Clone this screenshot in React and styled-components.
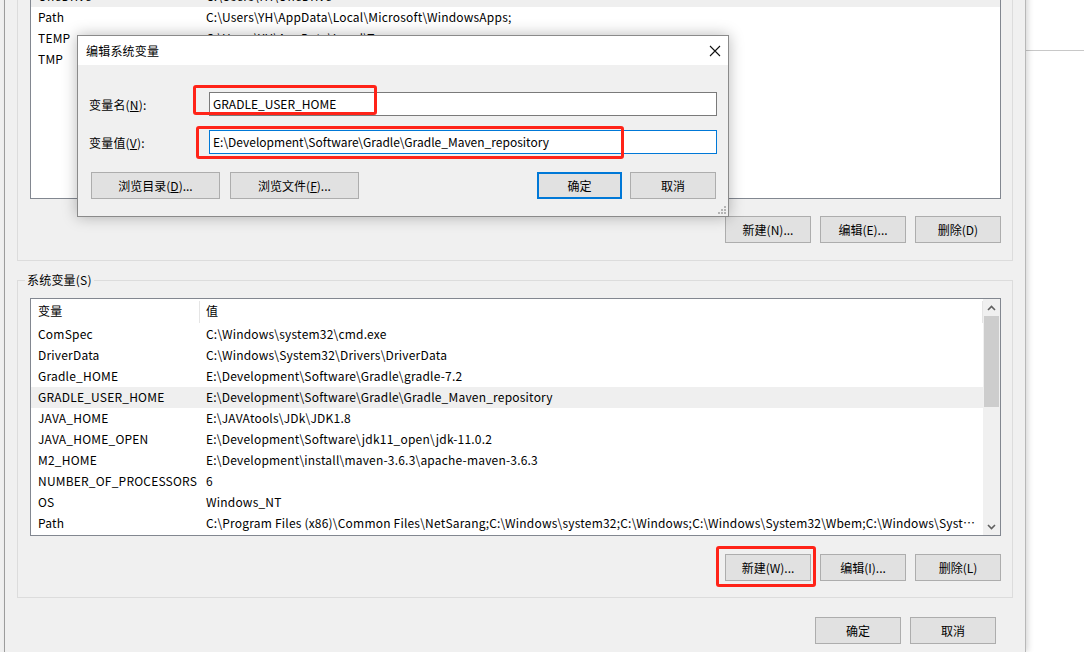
import styled, { createGlobalStyle, css } from "styled-components";

const GlobalStyle = createGlobalStyle`
  html, body {
    margin: 0;
    padding: 0;
    background: #fff;
    overflow: hidden;
  }
  body {
    font-family: "Noto Sans CJK SC", "Microsoft YaHei", sans-serif;
    font-size: 12px;
    letter-spacing: 0.2px;
    color: #000;
  }
`;

const Screen = styled.div`
  position: relative;
  width: 1084px;
  height: 652px;
  display: flex;
  overflow: hidden;
  background: #fff;
`;

const BackEdge = styled.div`
  width: 4px;
  flex: none;
  background: #f0f0f0;
  border-right: 1px solid #a0a0a0;
`;

const Window = styled.div`
  width: 1020px;
  flex: none;
  box-sizing: border-box;
  margin-top: -41px;
  padding: 0 12px 0 12px;
  background: #f0f0f0;
  box-shadow: 1px 0 0 #b8b8b8, 3px 0 6px rgba(0, 0, 0, 0.16);
  display: flex;
  flex-direction: column;
  position: relative;
  z-index: 1;
`;

const RightPane = styled.div`
  flex: 1;
  background: #fff;
`;

const PaneBar = styled.div`
  height: 50px;
  border-bottom: 1px solid #c8c8c8;
`;

const GroupBox = styled.fieldset`
  margin: ${(p) => p.$top || 0}px 0 0;
  padding: 10px 11px ${(p) => p.$bottom}px 12px;
  border: 1px solid #dcdcdc;
  min-width: 0;
`;

const Legend = styled.legend`
  margin-left: -5px;
  padding: 0 2px;
  line-height: 16px;
`;

const ListBox = styled.div`
  height: ${(p) => p.$h}px;
  box-sizing: border-box;
  background: #fff;
  border: 1px solid #828790;
  display: flex;
  overflow: hidden;
`;

const ListBody = styled.div`
  flex: 1;
  min-width: 0;
  display: flex;
  flex-direction: column;
`;

const HeaderRow = styled.div`
  display: flex;
  height: 25px;
  flex: none;
`;

const HeaderCell = styled.div`
  width: ${(p) => (p.$w ? `${p.$w}px` : "auto")};
  flex: ${(p) => (p.$w ? "none" : 1)};
  box-sizing: border-box;
  padding-left: ${(p) => p.$pad}px;
  padding-bottom: 3px;
  margin: 2px 0 1px;
  display: flex;
  align-items: center;
  border-right: 1px solid #e5e5e5;
`;

const Row = styled.div`
  display: flex;
  align-items: center;
  height: 21px;
  box-sizing: border-box;
  padding-bottom: 2px;
  flex: none;
  white-space: nowrap;
  background: ${(p) => (p.$selected ? "#efefef" : "transparent")};
`;

const NameCell = styled.div`
  width: 169px;
  flex: none;
  box-sizing: border-box;
  padding-left: 7px;
  overflow: hidden;
`;

const ValueCell = styled.div`
  flex: 1;
  min-width: 0;
  padding-left: 6px;
  padding-right: 6px;
  overflow: hidden;
  text-overflow: ellipsis;
`;

const ScrollBar = styled.div`
  width: 17px;
  flex: none;
  background: #f0f0f0;
  display: flex;
  flex-direction: column;
  align-items: center;
`;

const ScrollArrow = styled.div`
  height: 17px;
  width: 17px;
  flex: none;
  display: flex;
  align-items: center;
  justify-content: center;
`;

const Thumb = styled.div`
  width: 15px;
  height: 91px;
  background: #cdcdcd;
`;

const Track = styled.div`
  flex: 1;
`;

const ButtonRow = styled.div`
  display: flex;
  justify-content: flex-end;
  gap: ${(p) => p.$gap || 9}px;
  margin-top: ${(p) => p.$top}px;
  padding-right: ${(p) => p.$right || 0}px;
`;

const Button = styled.button`
  width: ${(p) => p.$w || 86}px;
  height: 27px;
  box-sizing: border-box;
  padding: 0;
  background: #e1e1e1;
  border: 1px solid #adadad;
  font: inherit;
  color: #000;
  ${(p) =>
    p.$default &&
    css`
      border: 2px solid #0078d7;
    `}
`;

const Dialog = styled.div`
  position: absolute;
  left: 77px;
  top: 35px;
  width: 652px;
  height: 182px;
  box-sizing: border-box;
  border: 1px solid #8a8a8a;
  background: #f0f0f0;
  box-shadow: 0 0 14px rgba(0, 0, 0, 0.28);
  display: flex;
  flex-direction: column;
  z-index: 5;
`;

const TitleBar = styled.div`
  height: 29px;
  flex: none;
  background: #fff;
  display: flex;
  align-items: center;
  justify-content: space-between;
  padding: 0 7px 0 8px;
`;

const DialogBody = styled.div`
  flex: 1;
  position: relative;
  padding: 27px 11px 0 11px;
  display: flex;
  flex-direction: column;
`;

const FieldRow = styled.div`
  display: flex;
  align-items: center;
  margin-top: ${(p) => p.$top || 0}px;
`;

const FieldLabel = styled.label`
  width: 120px;
  flex: none;
`;

const TextBox = styled.input`
  flex: 1;
  min-width: 0;
  height: 24px;
  box-sizing: border-box;
  margin: 0;
  padding: 0 3px 1px;
  background: #fff;
  border: 1px solid ${(p) => (p.$focused ? "#0078d7" : "#7a7a7a")};
  font: inherit;
  color: #000;
  outline: none;
`;

const DialogButtons = styled.div`
  display: flex;
  margin-top: 18px;
  padding: 0 1px 0 2px;
`;

const ButtonGroup = styled.div`
  display: flex;
  gap: ${(p) => p.$gap}px;
  margin-left: ${(p) => (p.$push ? "auto" : 0)};
`;

const Grip = styled.svg`
  position: absolute;
  right: 2px;
  bottom: 2px;
`;

const Highlight = styled.div`
  position: absolute;
  left: ${(p) => p.$x}px;
  top: ${(p) => p.$y}px;
  width: ${(p) => p.$w}px;
  height: ${(p) => p.$h}px;
  box-sizing: border-box;
  border: 3px solid #ff2318;
  border-radius: 3px;
  z-index: 10;
`;

const userVars = [
  ["OneDrive", "C:\\Users\\YH\\OneDrive", true],
  ["Path", "C:\\Users\\YH\\AppData\\Local\\Microsoft\\WindowsApps;"],
  ["TEMP", "C:\\Users\\YH\\AppData\\Local\\Temp"],
  ["TMP", "C:\\Users\\YH\\AppData\\Local\\Temp"],
];

const systemVars = [
  ["ComSpec", "C:\\Windows\\system32\\cmd.exe"],
  ["DriverData", "C:\\Windows\\System32\\Drivers\\DriverData"],
  ["Gradle_HOME", "E:\\Development\\Software\\Gradle\\gradle-7.2"],
  ["GRADLE_USER_HOME", "E:\\Development\\Software\\Gradle\\Gradle_Maven_repository", true],
  ["JAVA_HOME", "E:\\JAVAtools\\JDk\\JDK1.8"],
  ["JAVA_HOME_OPEN", "E:\\Development\\Software\\jdk11_open\\jdk-11.0.2"],
  ["M2_HOME", "E:\\Development\\install\\maven-3.6.3\\apache-maven-3.6.3"],
  ["NUMBER_OF_PROCESSORS", "6"],
  ["OS", "Windows_NT"],
  [
    "Path",
    "C:\\Program Files (x86)\\Common Files\\NetSarang;C:\\Windows\\system32;C:\\Windows;C:\\Windows\\System32\\Wbem;C:\\Windows\\System32\\WindowsPowerShell\\v1.0\\",
  ],
];

const Chevron = ({ up }) => (
  <svg width="9" height="6" viewBox="0 0 9 6">
    <polyline
      points={up ? "1,5 4.5,1.5 8,5" : "1,1 4.5,4.5 8,1"}
      fill="none"
      stroke="#606060"
      strokeWidth="1.6"
    />
  </svg>
);

const App = () => {
  return (
    <Screen>
      <GlobalStyle />
      <BackEdge />
      <Window>
        <GroupBox $bottom={17}>
          <Legend>YH 的用户变量(U)</Legend>
          <ListBox $h={214}>
            <ListBody>
              {userVars.map(([name, value, sel]) => (
                <Row key={name} $selected={sel}>
                  <NameCell>{name}</NameCell>
                  <ValueCell>{value}</ValueCell>
                </Row>
              ))}
            </ListBody>
          </ListBox>
          <ButtonRow $top={17}>
            <Button>新建(N)...</Button>
            <Button>编辑(E)...</Button>
            <Button>删除(D)</Button>
          </ButtonRow>
        </GroupBox>

        <GroupBox $top={11} $bottom={16}>
          <Legend>系统变量(S)</Legend>
          <ListBox $h={238}>
            <ListBody>
              <HeaderRow>
                <HeaderCell $w={169} $pad={7}>变量</HeaderCell>
                <HeaderCell $pad={6}>值</HeaderCell>
              </HeaderRow>
              {systemVars.map(([name, value, sel]) => (
                <Row key={name} $selected={sel}>
                  <NameCell>{name}</NameCell>
                  <ValueCell>{value}</ValueCell>
                </Row>
              ))}
            </ListBody>
            <ScrollBar>
              <ScrollArrow>
                <Chevron up />
              </ScrollArrow>
              <Thumb />
              <Track />
              <ScrollArrow>
                <Chevron />
              </ScrollArrow>
            </ScrollBar>
          </ListBox>
          <ButtonRow $top={18}>
            <Button>新建(W)...</Button>
            <Button>编辑(I)...</Button>
            <Button>删除(L)</Button>
          </ButtonRow>
        </GroupBox>

        <ButtonRow $top={19} $right={17}>
          <Button>确定</Button>
          <Button>取消</Button>
        </ButtonRow>
      </Window>
      <RightPane>
        <PaneBar />
      </RightPane>

      <Dialog>
        <TitleBar>
          <span>编辑系统变量</span>
          <svg width="12" height="12" viewBox="0 0 12 12">
            <path d="M1 1 L11 11 M11 1 L1 11" stroke="#111" strokeWidth="1.1" />
          </svg>
        </TitleBar>
        <DialogBody>
          <FieldRow>
            <FieldLabel>
              变量名(<u>N</u>):
            </FieldLabel>
            <TextBox readOnly value="GRADLE_USER_HOME" />
          </FieldRow>
          <FieldRow $top={14}>
            <FieldLabel>
              变量值(<u>V</u>):
            </FieldLabel>
            <TextBox
              $focused
              readOnly
              value="E:\Development\Software\Gradle\Gradle_Maven_repository"
            />
          </FieldRow>
          <DialogButtons>
            <ButtonGroup $gap={10}>
              <Button $w={129}>
                浏览目录(<u>D</u>)...
              </Button>
              <Button $w={129}>
                浏览文件(<u>F</u>)...
              </Button>
            </ButtonGroup>
            <ButtonGroup $gap={8} $push>
              <Button $w={85} $default>
                确定
              </Button>
              <Button $w={86}>取消</Button>
            </ButtonGroup>
          </DialogButtons>
          <Grip width="8" height="8" viewBox="0 0 8 8">
            <rect x="6" y="0" width="2" height="2" fill="#b4b4b4" />
            <rect x="3" y="3" width="2" height="2" fill="#b4b4b4" />
            <rect x="6" y="3" width="2" height="2" fill="#b4b4b4" />
            <rect x="0" y="6" width="2" height="2" fill="#b4b4b4" />
            <rect x="3" y="6" width="2" height="2" fill="#b4b4b4" />
            <rect x="6" y="6" width="2" height="2" fill="#b4b4b4" />
          </Grip>
        </DialogBody>
      </Dialog>

      <Highlight $x={193} $y={85} $w={184} $h={30} />
      <Highlight $x={196} $y={126} $w={428} $h={33} />
      <Highlight $x={716} $y={546} $w={100} $h={41} />
    </Screen>
  );
};

export default App;
